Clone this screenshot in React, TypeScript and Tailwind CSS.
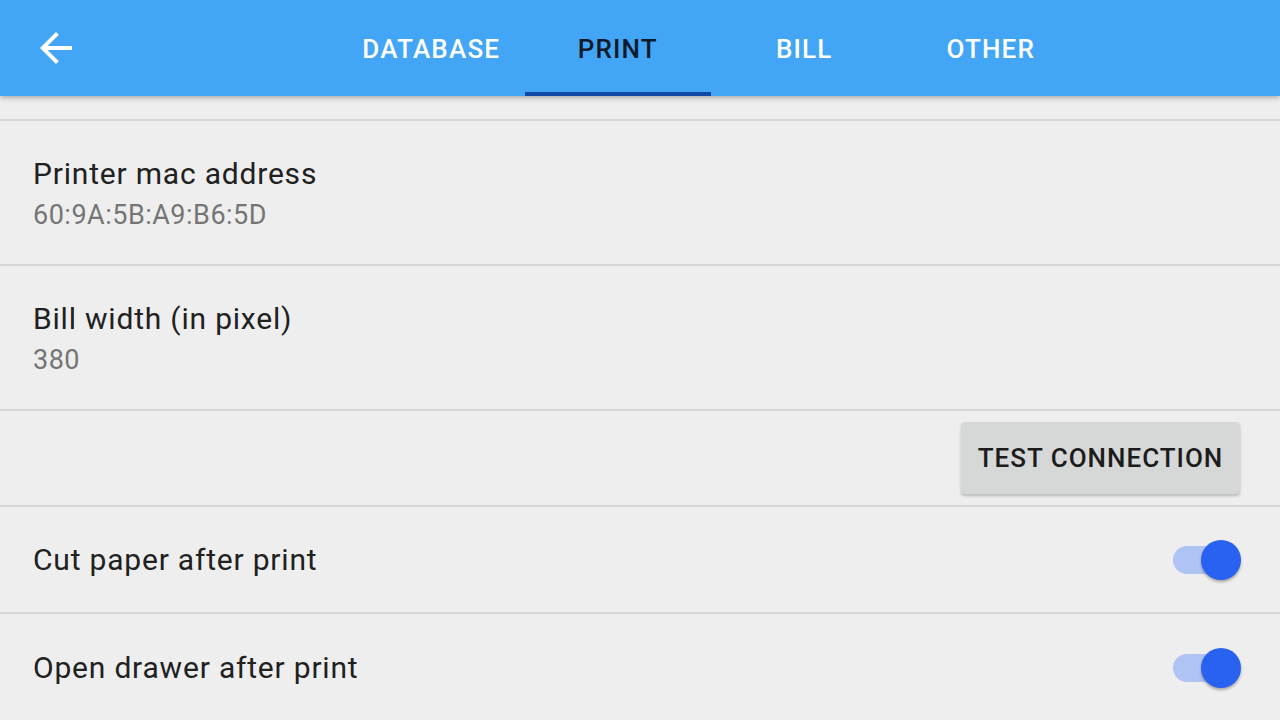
import React, { useState } from "react";

const tabs = ["DATABASE", "PRINT", "BILL", "OTHER"];

const Switch: React.FC<{ on: boolean; onToggle: () => void }> = ({ on, onToggle }) => (
  <button onClick={onToggle} className="relative w-[68px] h-[40px] shrink-0">
    <span
      className={`absolute left-0 top-[6px] h-[28px] w-[62px] rounded-full ${on ? "bg-[#b0c4f4]" : "bg-[#bdbdbd]"}`}
    />
    <span
      className={`absolute top-0 h-[40px] w-[40px] rounded-full shadow-[0_2px_3px_rgba(0,0,0,0.3)] ${
        on ? "right-0 bg-[#2962f0]" : "left-0 bg-[#fafafa]"
      }`}
    />
  </button>
);

export default function App() {
  const [active, setActive] = useState(1);
  const [cut, setCut] = useState(true);
  const [drawer, setDrawer] = useState(true);

  return (
    <div className="w-[1280px] h-[720px] overflow-hidden bg-[#eeeeee] flex flex-col font-['Roboto',sans-serif]">
      {/* app bar */}
      <div className="relative z-10 h-[96px] shrink-0 bg-[#42a5f5] flex items-stretch shadow-[0_2px_5px_rgba(0,0,0,0.28)]">
        <button className="ml-[32px] w-[48px] flex items-center justify-center">
          <svg width="48" height="48" viewBox="0 0 24 24" fill="white">
            <path d="M20 11H7.83l5.59-5.59L12 4l-8 8 8 8 1.41-1.41L7.83 13H20v-2z" />
          </svg>
        </button>
        <div className="ml-[258px] flex">
          {tabs.map((t, i) => (
            <button
              key={t}
              onClick={() => setActive(i)}
              className={`relative w-[186.5px] flex items-center justify-center text-[26px] font-medium tracking-[1.2px] ${
                i === active ? "text-[#0e1a2b]" : "text-white"
              }`}
            >
              <span className="mt-[3px]">{t}</span>
              {i === active && <span className="absolute left-0 right-0 bottom-0 h-[4px] bg-[#1148a8]" />}
            </button>
          ))}
        </div>
      </div>

      {/* settings list */}
      <div className="h-[25px] shrink-0 border-b-2 border-[#d6d6d6]" />

      <div className="h-[145px] shrink-0 border-b-2 border-[#d6d6d6] px-[33px] flex flex-col justify-center">
        <div className="text-[30px] leading-[36px] tracking-[0.8px] text-[#212121]">Printer mac address</div>
        <div className="mt-[9px] text-[27px] leading-[28px] tracking-[0.5px] text-[#757575]">60:9A:5B:A9:B6:5D</div>
      </div>

      <div className="h-[145px] shrink-0 border-b-2 border-[#d6d6d6] px-[33px] flex flex-col justify-center">
        <div className="text-[30px] leading-[36px] tracking-[0.8px] text-[#212121]">Bill width (in pixel)</div>
        <div className="mt-[9px] text-[27px] leading-[28px] tracking-[0.5px] text-[#757575]">380</div>
      </div>

      <div className="h-[96px] shrink-0 border-b-2 border-[#d6d6d6] pr-[40px] flex items-center justify-end">
        <button className="h-[72px] w-[279px] -mt-[1px] pt-[2px] rounded-[4px] bg-[#d6d7d7] shadow-[0_2px_3px_rgba(0,0,0,0.22)] text-[26px] font-medium text-[#1c1c1c] tracking-[1px]">
          TEST CONNECTION
        </button>
      </div>

      <div className="h-[107px] shrink-0 border-b-2 border-[#d6d6d6] pl-[33px] pr-[39px] flex items-center justify-between">
        <span className="text-[30px] tracking-[0.8px] text-[#212121]">Cut paper after print</span>
        <Switch on={cut} onToggle={() => setCut(!cut)} />
      </div>

      <div className="h-[107px] shrink-0 pl-[33px] pr-[39px] flex items-center justify-between">
        <span className="text-[30px] tracking-[0.8px] text-[#212121]">Open drawer after print</span>
        <Switch on={drawer} onToggle={() => setDrawer(!drawer)} />
      </div>
    </div>
  );
}
